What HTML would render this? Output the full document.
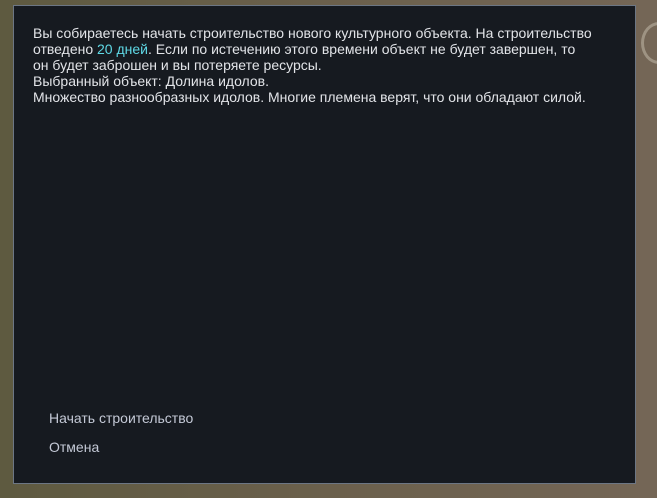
<!DOCTYPE html>
<html><head><meta charset="utf-8"><style>
html,body{margin:0;padding:0;width:657px;height:498px;overflow:hidden;
background:linear-gradient(90deg,#5e5a40 0%,#6b604c 50%,#746656 100%);font-family:"Liberation Sans",sans-serif;}
.panel{position:absolute;left:13px;top:5px;width:621px;height:477px;background:#161a20;border:1px solid #6c7684;}
.txt{position:absolute;left:19px;top:19px;width:570px;color:#e2e4e8;font-size:14px;line-height:16px;}
.hl{color:#5fd9e6;}
.btn{position:absolute;left:35px;color:#c4c9d6;font-size:14px;}
.c{position:absolute;left:641px;top:22px;width:30px;height:36px;border:3px solid #c8c0b0;border-radius:50%;opacity:.5;}
</style></head><body>
<div class="c"></div>
<div class="panel">
<div class="txt">Вы собираетесь начать строительство нового культурного объекта. На строительство<br>отведено <span class="hl">20 дней</span>. Если по истечению этого времени объект не будет завершен, то<br>он будет заброшен и вы потеряете ресурсы.<br>Выбранный объект: Долина идолов.<br>Множество разнообразных идолов. Многие племена верят, что они обладают силой.</div>
<div class="btn" style="top:404px">Начать строительство</div>
<div class="btn" style="top:433px">Отмена</div>
</div>
</body></html>
